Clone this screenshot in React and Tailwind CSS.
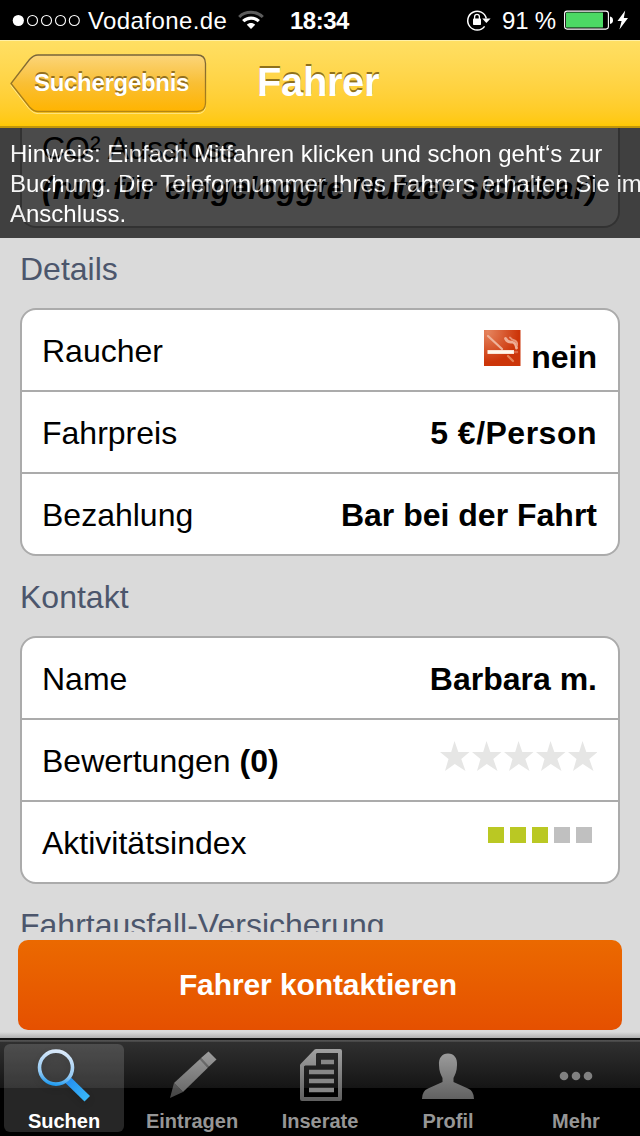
import React from "react";

function StatusBar() {
  return (
    <div className="flex h-10 shrink-0 items-center bg-black text-white">
      <svg className="ml-3 shrink-0" width="69" height="14" viewBox="0 0 69 14">
        <circle cx="6.3" cy="7.5" r="5.6" fill="#fff" />
        {[20.5, 34.5, 48.5, 62.3].map((x) => (
          <circle key={x} cx={x} cy="7.5" r="5" fill="none" stroke="#fff" strokeWidth="1.1" />
        ))}
      </svg>
      <span className="ml-[7px] w-[150px] pt-px text-2xl leading-10 tracking-[0.4px]">Vodafone.de</span>
      <svg className="shrink-0" width="26" height="20" viewBox="0 0 26 20" fill="none">
        <path d="M1.2 7C7.5 .8 18.5 .8 24.8 7" stroke="#5c5c5c" strokeWidth="3" />
        <path d="M5.2 11.2C9.5 7.100 16.500 7.100 20.8 11.2" stroke="#fff" strokeWidth="3.2" />
        <path d="M8.8 14.700C11 12.500 15 12.500 17.200 14.700L13 19Z" fill="#fff" />
      </svg>
      <span className="ml-[26px] w-[176px] pt-px text-2xl leading-10 font-bold tracking-[-0.5px]">18:34</span>
      <svg className="shrink-0" width="25" height="22" viewBox="0 0 25 22" fill="none">
        <path d="M18.6 17.4A9.4 9.4 0 1 1 20.3 9.500" stroke="#fff" strokeWidth="1.5" />
        <path d="M16.2 9.5H24.600L20.400 13.900Z" fill="#fff" />
        <rect x="7" y="9.5" width="8" height="6.5" rx="0.8" fill="#fff" />
        <path d="M8.6 10V7.8A2.4 2.4 0 0 1 13.4 7.8V10" stroke="#fff" strokeWidth="1.3" />
      </svg>
      <span className="ml-[11px] w-[62px] pt-px text-2xl leading-10 tracking-[-0.2px]">91 %</span>
      <svg className="shrink-0" width="66" height="22" viewBox="0 0 66 22">
        <rect x="0.6" y="2.1" width="43.8" height="18" rx="2.5" fill="none" stroke="#fff" strokeWidth="1.1" />
        <rect x="2" y="3.5" width="37" height="15" rx="0.5" fill="#4cd964" />
        <path d="M46 7.5Q49 8 49 11.2T46 14.9Z" fill="#fff" />
        <path d="M61.2 1.5L53.5 12H57.6L55.4 20.5L64 9H59.8Z" fill="#fff" />
      </svg>
    </div>
  );
}

function Header() {
  return (
    <header className="flex h-22 shrink-0 border-t border-b-2 border-t-[#fff0a8] border-b-[#c29709] bg-linear-to-b from-[#ffdf63] to-[#ffc803] text-white">
      <button className="relative mt-[13px] ml-[10px] h-[60px] w-[197px] text-left">
        <svg className="absolute inset-0" width="197" height="60" viewBox="0 0 197 60">
          <defs>
            <linearGradient id="back" x1="0" y1="0" x2="0" y2="1">
              <stop offset="0" stopColor="#fbd57a" />
              <stop offset="0.5" stopColor="#f9bf35" />
              <stop offset="1" stopColor="#ffb400" />
            </linearGradient>
            <linearGradient id="backEdge" x1="0" y1="0" x2="0" y2="1">
              <stop offset="0" stopColor="#77643a" />
              <stop offset="1" stopColor="#b58612" />
            </linearGradient>
          </defs>
          <path d="M1 30.5L19.5 6Q23.5 1.5 28 1.5H187Q195.5 1.5 195.5 10V50Q195.5 58.5 187 58.5H28Q23.5 58.5 19.5 54Z" fill="none" stroke="#ffe98e" strokeWidth="1" transform="translate(0 1.2)" />
          <path d="M1 29.5L19.5 5.5Q23.5 1 28 1H187Q195.5 1 195.5 9.5V49Q195.5 57.5 187 57.5H28Q23.5 57.5 19.5 53Z" fill="url(#back)" stroke="url(#backEdge)" strokeWidth="1.3" />
        </svg>
        <span className="relative -top-px pl-6 text-2xl font-bold tracking-[-0.3px] [text-shadow:0_-2px_0_#95701f]">Suchergebnis</span>
      </button>
      <h1 className="mt-[12px] ml-[50px] text-[40px] leading-[58px] font-bold tracking-[-0.4px] [text-shadow:0_-2px_0_#8f711b]">Fahrer</h1>
    </header>
  );
}

function Row({ label, children }) {
  return (
    <div className="box-content flex h-[78px] items-center justify-between pt-0.5 pr-[21px] pl-5">
      <span className="leading-10">{label}</span>
      <div className="leading-10 font-bold">{children}</div>
    </div>
  );
}

function Card({ children }) {
  return (
    <section className="shrink-0 divide-y-2 divide-[#ababab] rounded-2xl border-2 border-[#ababab] bg-white text-[32px] text-black">
      {children}
    </section>
  );
}

function Heading({ children }) {
  return <h2 className="h-20 shrink-0 text-[32px] leading-[82px] text-[#4c566c]">{children}</h2>;
}

function NoSmoking() {
  return (
    <svg className="-mt-px" width="37" height="36" viewBox="0 0 37 36">
      <defs>
        <radialGradient id="smoke" cx="0.1" cy="0.05" r="0.85">
          <stop offset="0" stopColor="#e5845e" />
          <stop offset="1" stopColor="#cc3509" />
        </radialGradient>
        <filter id="soft" x="-20%" y="-20%" width="140%" height="140%"><feGaussianBlur stdDeviation="0.7" /></filter>
      </defs>
      <rect width="36.5" height="36" fill="url(#smoke)" />
      <g filter="url(#soft)" fill="none" strokeLinecap="round">
        <path d="M4 6L18 19" stroke="#eeb39b" strokeWidth="2.2" />
        <path d="M21.500 8.500Q23.500 12.500 28 12Q32 13 32.500 18" stroke="#efae96" strokeWidth="2.800" />
        <path d="M26 7.500Q28 10 30.500 10.500Q33.500 12 33 15" stroke="#e9977a" strokeWidth="2" />
        <path d="M24 26L29 31" stroke="#e58257" strokeWidth="2.2" />
        <path d="M3.500 22H30" stroke="#fff8ed" strokeWidth="3.800" strokeLinecap="butt" />
        <path d="M31 22H33" stroke="#db6844" strokeWidth="2.500" />
      </g>
    </svg>
  );
}

function Stars() {
  return (
    <svg width="157" height="30" viewBox="0 0 157 30" fill="#e6e6e5">
      {[0, 32, 64, 96, 128].map((x) => (
        <path key={x} transform={`translate(${x} 0)`} d="M14.5 0L18.3 11H29.5L21.3 18L25.5 30L14.8 23L5 30L8.5 18L0 11H11.2Z" />
      ))}
    </svg>
  );
}

function Activity() {
  return (
    <div className="flex gap-1.5 pr-[5px]">
      <i className="size-4 bg-[#bac823]" />
      <i className="size-4 bg-[#bac823]" />
      <i className="size-4 bg-[#bac823]" />
      <i className="size-4 bg-[#c0c0c0]" />
      <i className="size-4 bg-[#c0c0c0]" />
    </div>
  );
}

const icons = {
  search: (
    <>
      <path d="M65.500 49L71 43.500L90 62L84.500 67.500Z" fill="url(#blue)" transform="translate(0 -4)" />
      <circle cx="56" cy="29.6" r="16.5" fill="none" stroke="url(#lens)" strokeWidth="3.6" />
    </>
  ),
  pencil: (
    <g fill="url(#grey)">
      <path d="M80.5 13.5L88.5 21.5L81 28.5L73 20Z" />
      <path d="M73 20L81 28.5L79.8 29.7L71.8 21.2Z" opacity="0.65" />
      <path d="M71.8 21.2L79.8 29.7L55 54L46 45Z" />
      <path d="M46 45L55 54L42 60Z" opacity="0.7" />
    </g>
  ),
  list: (
    <g>
      <path d="M60 13H84V61H46V27.5Z" fill="none" stroke="url(#grey)" strokeWidth="4" strokeLinejoin="round" />
      <path d="M60 12.5V27.5H46Z" fill="url(#grey)" />
      <path d="M65 24H78M53 34H78M53 43H78M53 52H78" stroke="#878787" strokeWidth="4.5" />
    </g>
  ),
  person: (
    <path d="M64 15.5C58 15.5 54.5 20 55 27C55 33 57 37 58.5 40V44L44 50.500Q38 53 38 61H90Q90 53 84 50.500L69.500 44V40C71 37 73 33 73 27C73.500 20 70 15.500 64 15.500Z" fill="url(#grey)" />
  ),
  more: (
    <g fill="#808080">
      <circle cx="52" cy="38" r="4.3" />
      <circle cx="64" cy="38" r="4.3" />
      <circle cx="76" cy="38" r="4.3" />
    </g>
  ),
};

function Tab({ icon, label, active }) {
  return (
    <button
      className={
        active
          ? "mx-1 mt-1.5 h-22 w-30 rounded-md bg-white/15 text-white"
          : "mt-1.5 h-22 w-32 text-[#969696]"
      }
    >
      <svg className={active ? "-mt-1.5 -ml-1 block drop-shadow-md" : "-mt-1.5 block"} width="128" height="68" viewBox="0 0 128 68">
        {icons[icon]}
      </svg>
      <span className="block translate-y-0.5 text-center text-xl leading-[26px] font-bold">{label}</span>
    </button>
  );
}

function TabBar() {
  return (
    <nav className="flex h-[98px] shrink-0 bg-[linear-gradient(#111_0,#111_2px,#555_2px,#444_4px,#303030_4px,#151515_50px,#000_50px)]">
      <svg className="absolute size-0">
        <defs>
          <linearGradient id="grey" gradientUnits="userSpaceOnUse" x1="0" y1="10" x2="0" y2="62">
            <stop stopColor="#a2a2a2" />
            <stop offset="1" stopColor="#606060" />
          </linearGradient>
          <linearGradient id="lens" gradientUnits="userSpaceOnUse" x1="58" y1="11" x2="52" y2="47">
            <stop stopColor="#deebfa" />
            <stop offset="0.7" stopColor="#92c8f2" />
            <stop offset="1" stopColor="#1c9af0" />
          </linearGradient>
          <linearGradient id="blue" x1="0" y1="0" x2="1" y2="1">
            <stop stopColor="#228af0" />
            <stop offset="1" stopColor="#3cbdf8" />
          </linearGradient>
        </defs>
      </svg>
      <Tab icon="search" label="Suchen" active />
      <Tab icon="pencil" label="Eintragen" />
      <Tab icon="list" label="Inserate" />
      <Tab icon="person" label="Profil" />
      <Tab icon="more" label="Mehr" />
    </nav>
  );
}

export default function App() {
  return (
    <div className="flex h-[1136px] w-[640px] flex-col overflow-hidden bg-[#dadada] font-['Liberation_Sans',Arial,sans-serif]">
      <StatusBar />
      <Header />
      <main className="relative flex h-[804px] shrink-0 flex-col overflow-hidden px-5">
        <section className="flex h-[100px] shrink-0 flex-col justify-end rounded-b-2xl border-2 border-t-0 border-[#ababab] bg-white px-5 pb-[18px] text-[32px] leading-10 whitespace-nowrap text-black">
          <p>CO² Ausstoss</p>
          <p className="font-bold italic">(nur für eingeloggte Nutzer sichtbar)</p>
        </section>
        <Heading>Details</Heading>
        <Card>
          <Row label="Raucher">
            <div className="flex gap-2.5">
              <NoSmoking />
              <span className="translate-y-1.5">nein</span>
            </div>
          </Row>
          <Row label="Fahrpreis"><span className="tracking-[0.5px]">5 €/Person</span></Row>
          <Row label="Bezahlung">Bar bei der Fahrt</Row>
        </Card>
        <Heading>Kontakt</Heading>
        <Card>
          <Row label="Name">Barbara m.</Row>
          <Row label={<>Bewertungen <b>(0)</b></>}>
            <div className="-mt-2.5"><Stars /></div>
          </Row>
          <Row label="Aktivitätsindex">
            <div className="-mt-4"><Activity /></div>
          </Row>
        </Card>
        <Heading>Fahrtausfall-Versicherung</Heading>
        <aside className="absolute inset-x-0 top-0 h-[110px] bg-black pt-[11px] pl-2.5 text-2xl leading-[30px] whitespace-nowrap text-white opacity-70">
          Hinweis: Einfach Mitfahren klicken und schon geht‘s zur
          <br />
          Buchung. Die Telefonnummer Ihres Fahrers erhalten Sie im
          <br />
          Anschluss.
        </aside>
      </main>
      <div className="h-[106px] shrink-0 bg-[linear-gradient(#dadada_100px,#b0b0b0_106px)] px-[18px] pt-2">
        <button className="h-[90px] w-full rounded-[10px] bg-linear-to-b from-[#eb6900] to-[#e55000] pr-1 pb-0.5 text-[30px] font-bold tracking-[-0.1px] text-white">
          Fahrer kontaktieren
        </button>
      </div>
      <TabBar />
    </div>
  );
}
